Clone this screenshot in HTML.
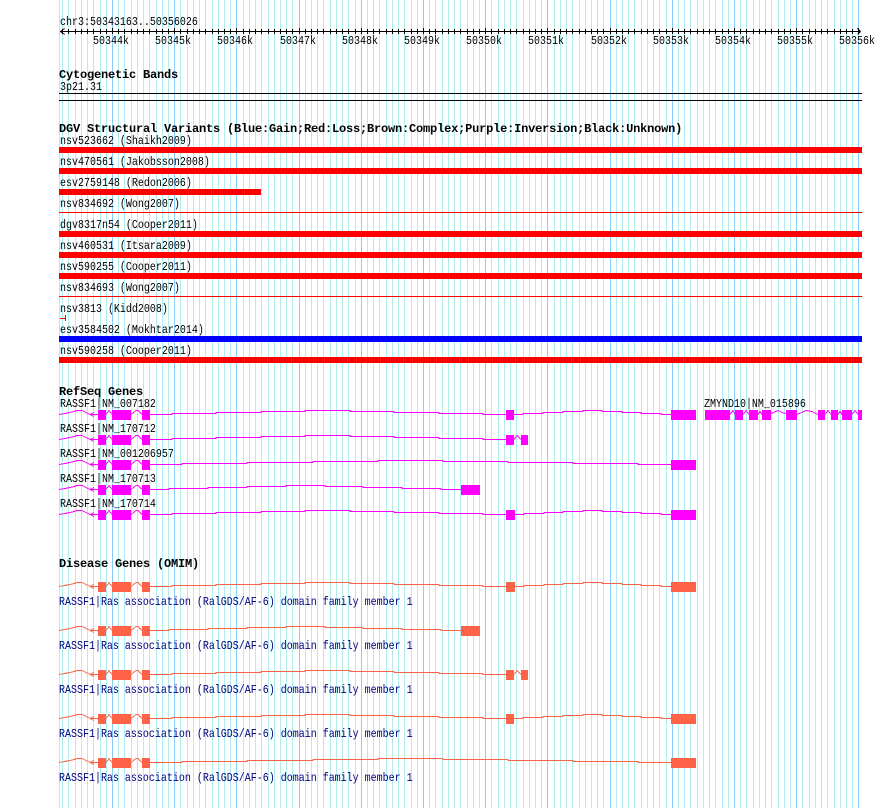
<!DOCTYPE html>
<html><head><meta charset="utf-8"><title>Browser</title>
<style>
html,body{margin:0;padding:0;background:#fff;}
svg{display:block;}
text{font-family:"Liberation Mono",monospace;font-size:12px;fill:#000;}
text.b{font-weight:bold;letter-spacing:-.2px;}
text.n{fill:#000080;}
</style></head><body>
<svg width="890" height="808" viewBox="0 0 890 808" xmlns="http://www.w3.org/2000/svg">
<defs>
<path id="minor" d="M59.5 0V808M62.5 0V808M68.5 0V808M75.5 0V808M81.5 0V808M87.5 0V808M93.5 0V808M100.5 0V808M106.5 0V808M118.5 0V808M124.5 0V808M131.5 0V808M137.5 0V808M143.5 0V808M149.5 0V808M156.5 0V808M162.5 0V808M168.5 0V808M180.5 0V808M187.5 0V808M193.5 0V808M199.5 0V808M205.5 0V808M212.5 0V808M218.5 0V808M224.5 0V808M230.5 0V808M243.5 0V808M249.5 0V808M255.5 0V808M261.5 0V808M268.5 0V808M274.5 0V808M280.5 0V808M286.5 0V808M292.5 0V808M305.5 0V808M311.5 0V808M317.5 0V808M323.5 0V808M330.5 0V808M336.5 0V808M342.5 0V808M348.5 0V808M355.5 0V808M367.5 0V808M373.5 0V808M379.5 0V808M386.5 0V808M392.5 0V808M398.5 0V808M404.5 0V808M411.5 0V808M417.5 0V808M429.5 0V808M435.5 0V808M442.5 0V808M448.5 0V808M454.5 0V808M460.5 0V808M467.5 0V808M473.5 0V808M479.5 0V808M491.5 0V808M498.5 0V808M504.5 0V808M510.5 0V808M516.5 0V808M523.5 0V808M529.5 0V808M535.5 0V808M541.5 0V808M554.5 0V808M560.5 0V808M566.5 0V808M572.5 0V808M579.5 0V808M585.5 0V808M591.5 0V808M597.5 0V808M603.5 0V808M616.5 0V808M622.5 0V808M628.5 0V808M634.5 0V808M641.5 0V808M647.5 0V808M653.5 0V808M659.5 0V808M666.5 0V808M678.5 0V808M684.5 0V808M690.5 0V808M697.5 0V808M703.5 0V808M709.5 0V808M715.5 0V808M722.5 0V808M728.5 0V808M740.5 0V808M746.5 0V808M753.5 0V808M759.5 0V808M765.5 0V808M771.5 0V808M778.5 0V808M784.5 0V808M790.5 0V808M802.5 0V808M809.5 0V808M815.5 0V808M821.5 0V808M827.5 0V808M834.5 0V808M840.5 0V808M846.5 0V808M852.5 0V808"/>
<path id="major" d="M112.5 0V808M174.5 0V808M236.5 0V808M299.5 0V808M361.5 0V808M423.5 0V808M485.5 0V808M547.5 0V808M610.5 0V808M672.5 0V808M734.5 0V808M796.5 0V808M858.5 0V808"/>
<clipPath id="tk"><rect x="60" y="29" width="802" height="5"/></clipPath>
<clipPath id="tm"><rect x="60" y="28" width="802" height="6"/></clipPath>

<g id="head">
<rect x="98" y="0" width="8" height="10"/><rect x="112" y="0" width="19" height="10"/><rect x="142" y="0" width="8" height="10"/>
<path fill="none" stroke="currentColor" d="M59 4.5L65 3.5L70 2.5L74 1.5L77 .5H82L86 2.5L90 4.5H98M90 4.5L94 2.5M90 4.5L94 6.5M106 4.5L109 .5L112 4.5M131 4.5L136 .5H138L142 4.5"/>
</g>
<g id="t1">
<use href="#head"/>
<rect x="506" y="0" width="8" height="10"/><rect x="671" y="0" width="25" height="10"/>
<path fill="none" stroke="currentColor" d="M150 4.5H172V3.5H216V2.5H261V1.5H305V.5H350V1.5H394V2.5H439V3.5H483V4.5H506M514 4.5H523V3.5H543V2.5H563V1.5H583V.5H602V1.5H622V2.5H641V3.5H661V4.5H671"/>
</g>
<g id="t2">
<use href="#head"/>
<rect x="506" y="0" width="8" height="10"/><rect x="521" y="0" width="7" height="10"/>
<path fill="none" stroke="currentColor" d="M150 4.5H172V3.5H216V2.5H261V1.5H305V.5H350V1.5H394V2.5H439V3.5H483V4.5H506M514 4.5L517 .5L521 4.5"/>
</g>
<g id="t3">
<use href="#head"/>
<rect x="671" y="0" width="25" height="10"/>
<path fill="none" stroke="currentColor" d="M150 4.5H182V3.5H247V2.5H313V1.5H378V.5H443V1.5H508V2.5H573V3.5H638V4.5H671"/>
</g>
<g id="t4">
<use href="#head"/>
<rect x="461" y="0" width="19" height="10"/>
<path fill="none" stroke="currentColor" d="M150 4.5H169V3.5H208V2.5H247V1.5H286V.5H325V1.5H363V2.5H402V3.5H441V4.5H461"/>
</g>
<g id="t5">
<use href="#head"/>
<rect x="506" y="0" width="9" height="10"/><rect x="671" y="0" width="25" height="10"/>
<path fill="none" stroke="currentColor" d="M150 4.5H172V3.5H216V2.5H261V1.5H305V.5H350V1.5H394V2.5H439V3.5H483V4.5H506M515 4.5H524V3.5H544V2.5H563V1.5H583V.5H602V1.5H622V2.5H641V3.5H661V4.5H671"/>
</g>
</defs>

<rect width="890" height="808" fill="#fff"/>
<use href="#minor" stroke="#aeeeee" fill="none"/>
<use href="#major" stroke="#87cefa" fill="none"/>

<!-- ruler -->
<rect x="60" y="31" width="800" height="1" fill="#000"/>
<g clip-path="url(#tk)"><use href="#minor" stroke="#000" fill="none"/></g>
<g clip-path="url(#tm)"><use href="#major" stroke="#000" fill="none"/></g>
<path fill="none" stroke="#000" shape-rendering="crispEdges" d="M60.5 31.5L64.5 28.5M60.5 31.5L64.5 34.5M860.5 31.5L857.5 28.5M860.5 31.5L857.5 34.5"/>

<!-- cytobands -->
<text class="b" x="59" y="78">Cytogenetic Bands</text>
<rect x="59" y="93" width="803" height="1" fill="#000"/>
<rect x="59" y="100" width="803" height="1" fill="#000"/>

<!-- DGV -->
<text class="b" x="59" y="132">DGV Structural Variants (Blue:Gain;Red:Loss;Brown:Complex;Purple:Inversion;Black:Unknown)</text>
<rect x="59" y="147" width="803" height="6" fill="#f00"/>
<rect x="59" y="168" width="803" height="6" fill="#f00"/>
<rect x="59" y="189" width="202" height="6" fill="#f00"/>
<rect x="59" y="212" width="803" height="1" fill="#f00"/>
<rect x="59" y="231" width="803" height="6" fill="#f00"/>
<rect x="59" y="252" width="803" height="6" fill="#f00"/>
<rect x="59" y="273" width="803" height="6" fill="#f00"/>
<rect x="59" y="296" width="803" height="1" fill="#f00"/>
<rect x="60" y="318" width="5" height="1" fill="#f00"/><rect x="65" y="315" width="1" height="6" fill="#f00"/>
<rect x="59" y="336" width="803" height="6" fill="#00f"/>
<rect x="59" y="357" width="803" height="6" fill="#f00"/>

<!-- RefSeq -->
<text class="b" x="59" y="395">RefSeq Genes</text>
<g fill="#f0f" color="#f0f" shape-rendering="crispEdges">
<use href="#t1" y="410"/><use href="#t2" y="435"/><use href="#t3" y="460"/><use href="#t4" y="485"/><use href="#t5" y="510"/>
<rect x="705" y="410" width="25" height="10"/><rect x="735" y="410" width="8" height="10"/><rect x="749" y="410" width="9" height="10"/><rect x="762" y="410" width="9" height="10"/><rect x="786" y="410" width="11" height="10"/><rect x="818" y="410" width="7" height="10"/><rect x="831" y="410" width="7" height="10"/><rect x="842" y="410" width="10" height="10"/><rect x="858" y="410" width="4" height="10"/>
<path fill="none" stroke="#f0f" d="M730 414.5L733 410.5L735 414.5M743 414.5L746 410.5L749 414.5M758 414.5L760 411.5L762 414.5M771 413.5L778 410.5L782 412.5L786 413.5M797 414.5L806 410.5L812 411.5L818 414.5M825 414.5L828 410.5L831 414.5M838 414.5L840 411.5L842 414.5M852 414.5L855 410.5L858 414.5"/>
</g>

<!-- Disease -->
<text class="b" x="59" y="567">Disease Genes (OMIM)</text>
<g fill="#ff6347" color="#ff6347" shape-rendering="crispEdges">
<use href="#t5" y="582"/><use href="#t4" y="626"/><use href="#t2" y="670"/><use href="#t1" y="714"/><use href="#t3" y="758"/>
</g>

<!-- regular labels: condensed so each character advances 6px -->
<g transform="scale(.83333,1)">
<text x="72" y="25">chr3:50343163..50356026</text>
<text x="111.6" y="44">50344k</text><text x="186" y="44">50345k</text><text x="260.4" y="44">50346k</text><text x="336" y="44">50347k</text><text x="410.4" y="44">50348k</text><text x="484.8" y="44">50349k</text><text x="559.2" y="44">50350k</text><text x="633.6" y="44">50351k</text><text x="709.2" y="44">50352k</text><text x="783.6" y="44">50353k</text><text x="858" y="44">50354k</text><text x="932.4" y="44">50355k</text><text x="1006.8" y="44">50356k</text>
<text x="72" y="90">3p21.31</text>
<text x="72" y="144">nsv523662 (Shaikh2009)</text>
<text x="72" y="165">nsv470561 (Jakobsson2008)</text>
<text x="72" y="186">esv2759148 (Redon2006)</text>
<text x="72" y="207">nsv834692 (Wong2007)</text>
<text x="72" y="228">dgv8317n54 (Cooper2011)</text>
<text x="72" y="249">nsv460531 (Itsara2009)</text>
<text x="72" y="270">nsv590255 (Cooper2011)</text>
<text x="72" y="291">nsv834693 (Wong2007)</text>
<text x="72" y="312">nsv3813 (Kidd2008)</text>
<text x="72" y="333">esv3584502 (Mokhtar2014)</text>
<text x="72" y="354">nsv590258 (Cooper2011)</text>
<text x="72" y="407">RASSF1|NM_007182</text>
<text x="72" y="432">RASSF1|NM_170712</text>
<text x="72" y="457">RASSF1|NM_001206957</text>
<text x="72" y="482">RASSF1|NM_170713</text>
<text x="72" y="507">RASSF1|NM_170714</text>
<text x="844.8" y="407">ZMYND10|NM_015896</text>
<text class="n" x="70.8" y="605">RASSF1|Ras association (RalGDS/AF-6) domain family member 1</text>
<text class="n" x="70.8" y="649">RASSF1|Ras association (RalGDS/AF-6) domain family member 1</text>
<text class="n" x="70.8" y="693">RASSF1|Ras association (RalGDS/AF-6) domain family member 1</text>
<text class="n" x="70.8" y="737">RASSF1|Ras association (RalGDS/AF-6) domain family member 1</text>
<text class="n" x="70.8" y="781">RASSF1|Ras association (RalGDS/AF-6) domain family member 1</text>
</g>
</svg>
</body></html>
